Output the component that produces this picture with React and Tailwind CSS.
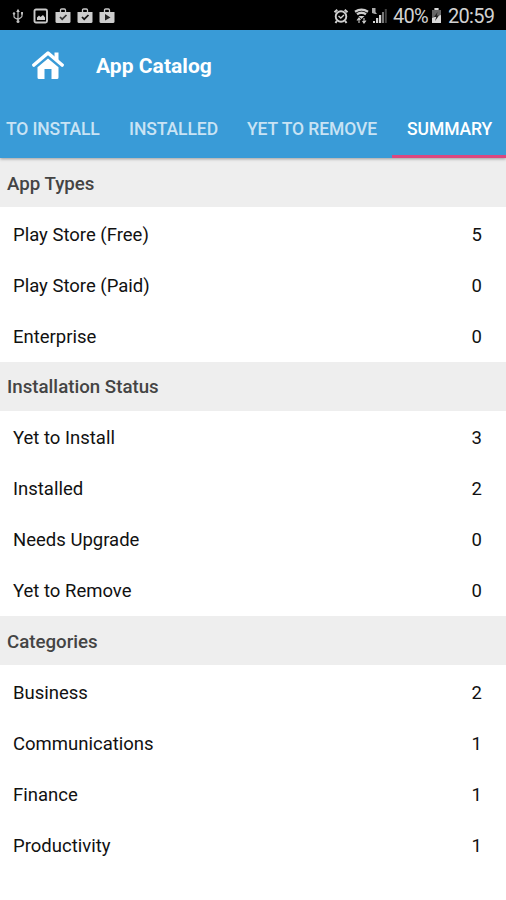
import React from "react";

const sections = [
  { title: "App Types", rows: [["Play Store (Free)", 5], ["Play Store (Paid)", 0], ["Enterprise", 0]] },
  { title: "Installation Status", rows: [["Yet to Install", 3], ["Installed", 2], ["Needs Upgrade", 0], ["Yet to Remove", 0]] },
  { title: "Categories", rows: [["Business", 2], ["Communications", 1], ["Finance", 1], ["Productivity", 1]] },
];

function Bag({ children }) {
  return (
    <svg className="h-4 w-4" viewBox="0 0 16 16" fill="none">
      <path d="M5.500 4V2.200Q5.500 1 6.700 1h2.600q1.200 0 1.200 1.200V4" stroke="#c9c9c9" strokeWidth="1.300" />
      <path d="M.5 4h15v9.500q0 1.500-1.500 1.500H2Q.5 15 .5 13.500z" fill="#cdcdcd" />
      {children}
    </svg>
  );
}

function StatusBar() {
  return (
    <div className="flex h-[30px] items-center bg-black pl-3 pr-[11px] pt-px text-[#d2d2d2]">
      <svg className="h-4 w-3" viewBox="0 0 12 16" fill="none" stroke="#bdbdbd" strokeWidth="1.200">
        <path d="M6 2v12M2 5v3.500q0 1 1 1.500l3 1.500 3-2q1-.7 1-1.500V5" />
        <path d="M4.200 4 6 .8 7.800 4z" fill="#c9c9c9" stroke="none" />
        <circle cx="2" cy="5.500" r="1.200" fill="#bdbdbd" stroke="none" />
        <path d="M9 4h2v2.500H9z" fill="#bdbdbd" stroke="none" />
        <circle cx="6" cy="13.500" r="1.500" fill="#bdbdbd" stroke="none" />
      </svg>
      <svg className="ml-[9px] h-4 w-4" viewBox="0 0 16 16" fill="none">
        <rect x="1.500" y="1.500" width="12.500" height="13" rx="1.500" stroke="#c9c9c9" strokeWidth="1.900" />
        <path d="M4 12V9.500l2-2 1.500 1.500L10 7l2 2.500V12z" fill="#d0d0d0" />
      </svg>
      <div className="ml-1.5 flex gap-[6px]">
        <Bag><path d="m5 9 2.200 2.200L11.500 7" stroke="#333" strokeWidth="1.700" /></Bag>
        <Bag><path d="m5 9 2.200 2.200L11.500 7" stroke="#111" strokeWidth="1.700" /></Bag>
        <Bag><path d="m6 6 5.500 3.500L6 12.500z" fill="#222" /></Bag>
      </div>
      <div className="ml-auto flex items-center">
        <svg className="mr-px h-4 w-4" viewBox="0 0 16 16" fill="none" stroke="#cfcfcf">
          <circle cx="8" cy="8.500" r="5.300" strokeWidth="1.900" />
          <path d="M1.500 4.300 4.300 1.700M14.500 4.300l-2.800-2.600M3.800 13l-1.300 2M12.200 13l1.300 2" strokeWidth="2" />
          <path d="m5.500 8 2.300 2L11 7" strokeWidth="1.400" />
        </svg>
        <svg className="ml-[4px] h-4 w-[15px]" viewBox="0 0 15 16" fill="none" stroke="#cfcfcf">
          <path d="M1 3.800Q7.500-.5 14 3.800M3 6.300Q7.500 3.200 12 6.300" strokeWidth="2.300" />
          <path d="M4.500 8h6l-3 3z" fill="#cfcfcf" stroke="none" />
          <path d="M5 10v5M3 12.500l2-2.500 1.500 2M10 10v5M8.500 13l1.500 2 2-2.500" strokeWidth="1.100" />
        </svg>
        <svg className="ml-[2px] mr-px h-4 w-4" viewBox="0 0 16 16">
          <path d="M1 0h3.500v4l1.500 2H4L1 5z" fill="#aaa" />
          <path d="M2 13h2v2H2zM5 10h2.200v5H5zM8 7h2.200v8H8z" fill="#d4d4d4" />
          <path d="M11 4h2v11h-2z" fill="#777" />
          <path d="M13.800 1h2v14h-2z" fill="#444" />
        </svg>
        <span className="ml-[5px] w-[35px] whitespace-nowrap text-[20px] leading-[30px] tracking-[-0.7px]">40%</span>
        <svg className="ml-[3px] h-4 w-[11px]" viewBox="0 0 11 16">
          <path d="M3.500 0h4v2H10v6L1 12V2h2.500z" fill="#666" />
          <path d="M1 10 10 7v8H1zM3.500 0h4v2h-4z" fill="#dadada" />
          <path d="M6.500 4 3 9h2.200L4 13l4-5.500H5.800z" fill="#222" />
        </svg>
        <span className="ml-[6px] w-[47px] whitespace-nowrap text-[20px] leading-[30px] tracking-[-0.7px]">20:59</span>
      </div>
    </div>
  );
}

export default function App() {
  return (
    <div className="h-[900px] w-[506px] overflow-hidden bg-white font-['Roboto',sans-serif] text-black">
      <StatusBar />
      <header className="relative h-32 bg-[#399bd7] shadow-[0_1px_3px_rgba(0,0,0,0.35)]">
        <div className="flex h-[70px] items-center pl-8">
          <svg className="h-[30px] w-8" viewBox="0 0 32 30" fill="none">
            <path d="M22.500 2.500h4V12l-4-4z" fill="#fff" />
            <path d="M1.900 15 16 3l14.100 12" stroke="#fff" strokeWidth="3.600" strokeLinecap="round" strokeLinejoin="round" />
            <path d="M16 8.500 26.500 17.300V27.500q0 1.500-1.500 1.500h-5.500V19h-7v10H7q-1.500 0-1.500-1.500V17.300z" fill="#fff" />
          </svg>
          <h1 className="ml-8 pt-[3px] text-[21px] font-bold tracking-[0.05px] text-white">App Catalog</h1>
        </div>
        <nav className="flex h-[58px] whitespace-nowrap text-[17.5px] font-medium leading-[59px] tracking-[-0.07px] text-[#c9e3f4]">
          <span className="w-[123px] pl-[6px] tracking-[-0.15px]">TO INSTALL</span>
          <span className="w-[118px] pl-[6px]">INSTALLED</span>
          <span className="w-[151px] pl-[6px]">YET TO REMOVE</span>
          <span className="w-[114px] border-b-[3px] border-[#dc477f] pl-[15px] text-white">SUMMARY</span>
        </nav>
      </header>
      <main>
        {sections.map((s) => (
          <section key={s.title}>
            <h2 className="flex h-[49px] items-center bg-[#eeeeee] pl-[7px] pt-[3px] text-[18.7px] font-medium text-[#444]">{s.title}</h2>
            <div className="pt-[1.5px]">
              {s.rows.map(([name, count]) => (
                <div key={name} className="flex h-[51px] items-center justify-between pl-[13px] pr-6 pt-[3px] text-[18.5px] text-[#111]">
                  <span>{name}</span>
                  <span>{count}</span>
                </div>
              ))}
            </div>
          </section>
        ))}
      </main>
    </div>
  );
}
